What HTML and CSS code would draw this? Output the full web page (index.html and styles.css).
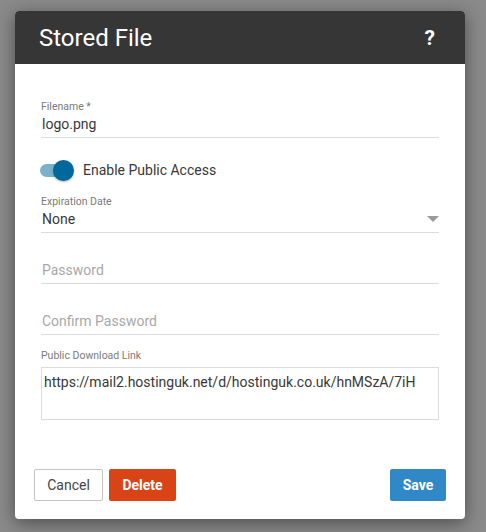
FILE: index.html
```html
<!DOCTYPE html>
<html>
<head>
<meta charset="utf-8">
<link rel="stylesheet" href="styles.css">
</head>
<body>
<div class="dialog">
  <div class="header">
    <h1 class="title">Stored File</h1>
    <span class="help">?</span>
  </div>
  <div class="body">
    <div class="field first">
      <div class="label">Filename *</div>
      <div class="value">logo.png</div>
    </div>
    <div class="toggle-row">
      <span class="toggle"><span class="track"></span><span class="thumb"></span></span>
      <span class="toggle-text">Enable Public Access</span>
    </div>
    <div class="field select">
      <div class="label">Expiration Date</div>
      <div class="value">None<span class="caret"></span></div>
    </div>
    <div class="field">
      <div class="label"></div>
      <div class="value placeholder">Password</div>
    </div>
    <div class="field">
      <div class="label"></div>
      <div class="value placeholder">Confirm Password</div>
    </div>
    <div class="link-field">
      <div class="label">Public Download Link</div>
      <div class="textarea">https://mail2.hostinguk.net/d/hostinguk.co.uk/hnMSzA/7iH</div>
    </div>
  </div>
  <div class="footer">
    <button class="btn btn-cancel">Cancel</button>
    <button class="btn btn-delete">Delete</button>
    <span class="spacer"></span>
    <button class="btn btn-save">Save</button>
  </div>
</div>
</body>
</html>
```

FILE: styles.css
```css
html, body {
  margin: 0;
  padding: 0;
}
body {
  background: #8a8a8a;
  font-family: Roboto, "Liberation Sans", sans-serif;
  width: 486px;
  height: 532px;
  overflow: hidden;
}
.dialog {
  margin: 11px 0 0 15px;
  width: 450px;
  height: 508px;
  background: #fff;
  border-radius: 4px;
  box-shadow: 0 4px 18px rgba(0, 0, 0, 0.45);
  display: flex;
  flex-direction: column;
  overflow: hidden;
}
.header {
  height: 53px;
  background: #363636;
  display: flex;
  align-items: center;
  padding: 0 30px 0 24px;
  box-sizing: border-box;
}
.title {
  margin: 0;
  flex: 1;
  color: #fff;
  font-size: 24px;
  font-weight: 400;
  line-height: 28px;
}
.help {
  color: #fff;
  font-size: 21px;
  font-weight: 700;
  line-height: 24px;
}
.body {
  padding: 36px 26px 0 26px;
  flex: 1;
  display: flex;
  flex-direction: column;
}
.field {
  border-bottom: 1px solid #dcdcdc;
  padding-bottom: 3px;
  margin-bottom: 13px;
}
.label {
  font-size: 10.5px;
  line-height: 14px;
  height: 14px;
  color: #7a7a7a;
}
.value {
  font-size: 14px;
  line-height: 20px;
  color: #383838;
  padding-left: 1px;
  display: flex;
  align-items: center;
}
.placeholder {
  color: #a8a8a8;
}
.select .value {
  justify-content: space-between;
}
.caret {
  width: 0;
  height: 0;
  border-left: 6px solid transparent;
  border-right: 6px solid transparent;
  border-top: 6px solid #9a9a9a;
}
.toggle-row {
  display: flex;
  align-items: center;
  height: 24px;
  margin-top: 7px;
  margin-bottom: 13px;
}
.toggle {
  position: relative;
  width: 36px;
  height: 24px;
  margin-left: -2px;
  margin-right: 8px;
  display: inline-block;
}
.track {
  position: absolute;
  left: 1px;
  top: 6px;
  width: 30px;
  height: 13px;
  border-radius: 7px;
  background: #7bb0ca;
}
.thumb {
  position: absolute;
  left: 14px;
  top: 2px;
  width: 21px;
  height: 21px;
  border-radius: 50%;
  background: #01689b;
  box-shadow: 0 1px 2px rgba(0, 0, 0, 0.3);
}
.toggle-text {
  font-size: 14px;
  color: #383838;
}
.link-field {
  margin-top: 2px;
}
.link-field .label {
  line-height: 12px;
  height: 12px;
  margin-bottom: 5px;
}
.textarea {
  height: 53px;
  box-sizing: border-box;
  border: 1px solid #dcdcdc;
  padding: 4px 2px;
  font-size: 14px;
  line-height: 20px;
  color: #383838;
}
.footer {
  display: flex;
  align-items: center;
  padding: 0 19px 18px 19px;
  gap: 6px;
}
.spacer {
  flex: 1;
}
.btn {
  height: 32px;
  border-radius: 2px;
  font-family: Roboto, "Liberation Sans", sans-serif;
  font-size: 14px;
  border: 1px solid transparent;
  padding: 0;
  box-sizing: border-box;
}
.btn-cancel {
  width: 69px;
  background: #fff;
  border-color: #c4c4c4;
  color: #444;
}
.btn-delete {
  width: 67px;
  background: #d94417;
  color: #fff;
  font-weight: 700;
}
.btn-save {
  width: 56px;
  background: #3088c6;
  color: #fff;
  font-weight: 700;
}
```
